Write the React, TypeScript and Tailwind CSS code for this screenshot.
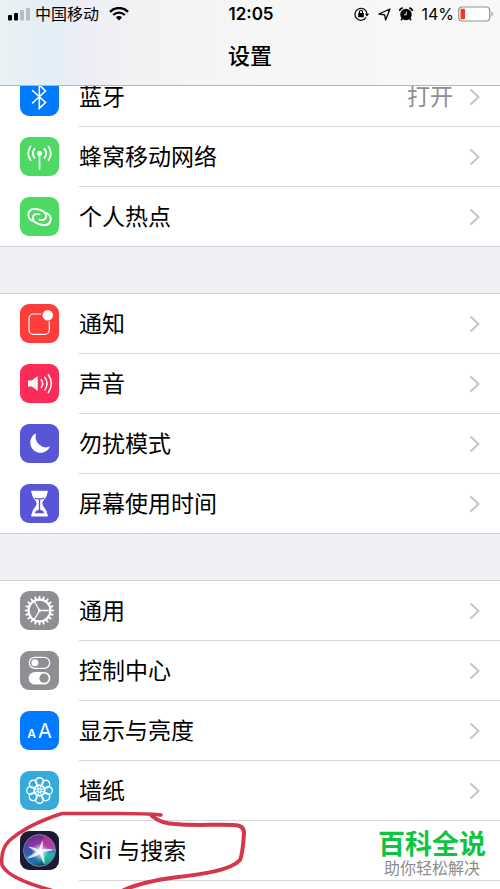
import type { ReactNode } from "react";

type SettingItem = {
  label: string;
  icon: ReactNode;
  tile: string;
  value?: string;
  marked?: boolean;
};

const GEAR_TEETH = Array.from({ length: 20 }, (_, i) => i * 18);
const PETALS = Array.from({ length: 8 }, (_, i) => i * 45);

function Glyph({ children }: { children: ReactNode }) {
  return (
    <svg viewBox="0 0 39 39" className="size-full" fill="none" stroke="white" strokeLinecap="round" strokeLinejoin="round" aria-hidden="true">
      {children}
    </svg>
  );
}

function BluetoothIcon() {
  return (
    <Glyph>
      <path d="M12.5 13.5 25.5 25.5 19.3 31.3V8l6.2 6L12.5 26" strokeWidth="1.6" strokeLinejoin="miter" />
    </Glyph>
  );
}

function CellularIcon() {
  return (
    <Glyph>
      <circle cx="19.5" cy="16.3" r="2.6" fill="white" stroke="none" />
      <path d="M19.5 17v15" strokeWidth="1.7" />
      <path d="M14.6 11.8a6.6 6.6 0 0 0 0 9M24.4 11.8a6.6 6.6 0 0 1 0 9" strokeWidth="1.8" />
      <path d="M10.6 9.5a11 11 0 0 0 0 13.6M28.4 9.5a11 11 0 0 1 0 13.6" strokeWidth="1.8" />
    </Glyph>
  );
}

function HotspotIcon() {
  const link = "M12.4 24C9.6 22.6 8 20 8.4 17 9 13.300 12 11.600 16 12 22 12.600 26.600 15.600 26.200 19.600 25.900 22.400 23 23.500 19.500 22.800";

  return (
    <Glyph>
      <path d={link} strokeWidth="1.9" />
      <path d={link} strokeWidth="1.9" transform="rotate(180 19.5 20)" />
    </Glyph>
  );
}

function NotificationIcon() {
  return (
    <Glyph>
      <rect x="9" y="10" width="20.3" height="20.3" rx="4.5" strokeWidth="1.2" />
      <circle cx="27.8" cy="11.2" r="6.6" fill="#fc3d39" stroke="none" />
      <circle cx="27.8" cy="11.2" r="5.2" fill="white" stroke="none" />
    </Glyph>
  );
}

function SoundIcon() {
  return (
    <Glyph>
      <path d="M8 16.4h3.8l5.9-4.4v15l-5.9-4.4H8Z" fill="white" stroke="none" />
      <path d="M21.2 15.7a6.4 6.4 0 0 1 0 7.8" strokeWidth="1.5" />
      <path d="M24.8 13.2a10.5 10.5 0 0 1 0 12.8" strokeWidth="1.5" />
      <path d="M28.3 10.7a14.6 14.6 0 0 1 0 17.8" strokeWidth="1.5" />
    </Glyph>
  );
}

function MoonIcon() {
  return (
    <Glyph>
      <path d="M16.2 9.2A10.3 10.3 0 1 0 30 22.6 10.6 10.6 0 0 1 16.2 9.2Z" fill="white" stroke="none" />
    </Glyph>
  );
}

function HourglassIcon() {
  return (
    <Glyph>
      <path
        d="M12.2 6.7h14.6c1 0 1.3 1.1.8 2l-.6 1.3c-.2 4.2-4.6 6-4.6 9.6s4.4 5.4 4.6 9.6l.6 1.3c.5.9.2 2-.8 2H12.2c-1 0-1.3-1.1-.8-2l.6-1.3c.2-4.2 4.6-6 4.6-9.6s-4.4-5.4-4.6-9.6l-.6-1.3c-.5-.9-.2-2 .8-2Z"
        fill="white"
        stroke="none"
      />
      <path d="M15.5 14.3c2.4.8 5.6.8 8 0M19.5 15v11.5" stroke="#5856d6" strokeWidth="1.3" />
      <path d="M14.6 29.2c1.1-2.6 3.2-3.4 4.9-3.4s3.8.8 4.9 3.4Z" fill="#5856d6" stroke="none" />
    </Glyph>
  );
}

function GearIcon() {
  return (
    <Glyph>
      <circle cx="19.5" cy="19.5" r="10.9" strokeWidth="2.1" />
      {GEAR_TEETH.map((angle) => (
        <path key={angle} d="m18.4 8.6.5-3.6h1.2l.5 3.6Z" fill="white" strokeWidth=".3" transform={`rotate(${angle} 19.5 19.5)`} />
      ))}
      <circle cx="19.5" cy="19.5" r="1.5" fill="white" stroke="none" />
      <path d="M19.5 19.5H30M19.5 19.5l-5.3-9.2M19.5 19.5l-5.3 9.2" strokeWidth="1.3" />
    </Glyph>
  );
}

function ControlIcon() {
  return (
    <Glyph>
      <rect x="9.3" y="6.3" width="20.4" height="11" rx="5.5" strokeWidth="1.3" />
      <circle cx="14.9" cy="11.8" r="3.5" fill="white" stroke="none" />
      <rect x="8.7" y="20.9" width="21.6" height="12.6" rx="6.3" fill="white" stroke="none" />
      <circle cx="24" cy="27.2" r="4.6" fill="#8e8e93" stroke="none" />
    </Glyph>
  );
}

function DisplayIcon() {
  return (
    <span className="flex size-full items-baseline justify-center gap-0.5 pt-1 font-[Inter,sans-serif] leading-8 text-white" aria-hidden="true">
      <span className="text-[12px] font-semibold">A</span>
      <span className="text-[20px]">A</span>
    </span>
  );
}

function WallpaperIcon() {
  return (
    <Glyph>
      {PETALS.map((angle) => (
        <g key={angle} transform={`rotate(${angle} 19.5 19.5)`}>
          <circle cx="19.5" cy="10.6" r="3.9" strokeWidth="1.4" />
          <ellipse cx="19.5" cy="15.4" rx="1.3" ry="2" strokeWidth=".7" />
        </g>
      ))}
      <circle cx="19.5" cy="19.5" r="1.7" strokeWidth="1.2" />
    </Glyph>
  );
}

function SiriIcon() {
  return (
    <Glyph>
      <defs>
        <linearGradient id="siri-orb" x1="0.3" y1="0" x2="0.6" y2="1">
          <stop offset="0" stopColor="#5a2a8c" />
          <stop offset=".35" stopColor="#9a3aa4" />
          <stop offset=".58" stopColor="#3d7fc0" />
          <stop offset=".8" stopColor="#1c8f9c" />
          <stop offset="1" stopColor="#14304f" />
        </linearGradient>
        <radialGradient id="siri-glow">
          <stop offset="0" stopColor="white" />
          <stop offset=".35" stopColor="#d9f4ff" stopOpacity=".7" />
          <stop offset="1" stopColor="white" stopOpacity="0" />
        </radialGradient>
      </defs>
      <circle cx="19.5" cy="19.5" r="16" fill="url(#siri-orb)" stroke="#9a91b5" strokeWidth=".8" />
      <path d="M20 19 24 4.5c7 2 11 8 11 14Z" fill="#d8358f" stroke="none" opacity=".55" />
      <path d="M20 20 5 12.5c-2 5-1.3 9.5.5 13Z" fill="#2458a8" stroke="none" opacity=".7" />
      <path d="M21 21l13.5 1c-1.5 6-5 10-9.5 12Z" fill="#27c6ad" stroke="none" opacity=".65" />
      <path d="M18.5 21 18 34.5c-5-.5-9-3.5-11-8Z" fill="#2c4fc0" stroke="none" opacity=".5" />
      <circle cx="20" cy="21" r="8.5" fill="url(#siri-glow)" stroke="none" />
      <path
        d="M8 15.5c4 .3 7.5 1.5 10.5 3.3L22.5 9c.6 3.5.4 6.5-.4 9.3 4-.8 8-.6 12 .8-4 1-7.8 1.7-11.3 2.2 1.3 4 1.8 8 1.7 12.5-2-3.5-3.5-7-4.7-10.7-4 2.6-8.3 4-13.3 4.4 3.5-2.4 6.8-4.7 10-7-3-1.3-6-3-8.5-5Z"
        fill="white"
        stroke="none"
        opacity=".8"
      />
    </Glyph>
  );
}

const groups: SettingItem[][] = [
  [
    { label: "蓝牙", icon: <BluetoothIcon />, tile: "bg-[#007aff]", value: "打开" },
    { label: "蜂窝移动网络", icon: <CellularIcon />, tile: "bg-[#4cd964]" },
    { label: "个人热点", icon: <HotspotIcon />, tile: "bg-[#4cd964]" },
  ],
  [
    { label: "通知", icon: <NotificationIcon />, tile: "bg-[#fc3d39]" },
    { label: "声音", icon: <SoundIcon />, tile: "bg-[#fc2b58]" },
    { label: "勿扰模式", icon: <MoonIcon />, tile: "bg-[#5856d6]" },
    { label: "屏幕使用时间", icon: <HourglassIcon />, tile: "bg-[#5856d6]" },
  ],
  [
    { label: "通用", icon: <GearIcon />, tile: "bg-[#8e8e93]" },
    { label: "控制中心", icon: <ControlIcon />, tile: "bg-[#8e8e93]" },
    { label: "显示与亮度", icon: <DisplayIcon />, tile: "bg-[#007aff]" },
    { label: "墙纸", icon: <WallpaperIcon />, tile: "bg-[#37aadc]" },
    { label: "Siri 与搜索", icon: <SiriIcon />, tile: "bg-[#1b1b35]", marked: true },
  ],
];

function StatusBar() {
  return (
    <div className="grid h-7 grid-cols-[1fr_auto_1fr] items-center pl-2 pr-1.5 text-[17px] leading-7 text-black">
      <div className="flex items-center">
        <svg width="23" height="14" viewBox="0 0 23 14" aria-hidden="true">
          <rect x="0" y="8" width="4" height="5.5" rx="1" />
          <rect x="6" y="6" width="4" height="7.5" rx="1" />
          <rect x="12" y="3" width="4" height="10.5" rx="1" fill="#b9bec2" />
          <rect x="18" y="1" width="4" height="12.5" rx="1" fill="#b9bec2" />
        </svg>
        <span className="ml-1 text-[16px]">中国移动</span>
        <svg width="20" height="14" viewBox="0 0 20 14" className="ml-2.5" fill="none" stroke="black" aria-hidden="true">
          <path d="M1 4.8a12.8 12.8 0 0 1 18 0" strokeWidth="2.5" />
          <path d="M4.2 8a8.2 8.2 0 0 1 11.6 0" strokeWidth="2.3" />
          <path d="M10 13.5 6.9 10.4a4.4 4.4 0 0 1 6.2 0Z" fill="black" stroke="none" />
        </svg>
      </div>
      <span className="font-semibold">12:05</span>
      <div className="flex items-center justify-end">
        <svg width="16" height="14" viewBox="0 0 16 14" fill="none" stroke="black" aria-hidden="true">
          <path d="M12.2 10.3A6 6 0 1 1 13 7" strokeWidth="1.2" />
          <path d="M10.8 6.8h4.4L13 9.6Z" fill="black" stroke="none" />
          <rect x="4.2" y="6" width="5.6" height="4.2" rx=".5" fill="black" stroke="none" />
          <path d="M5.5 6V4.8a1.5 1.5 0 0 1 3 0V6" strokeWidth="1.1" />
        </svg>
        <svg width="13" height="13" viewBox="0 0 13 13" className="ml-2" fill="none" stroke="black" strokeWidth="1.3" strokeLinejoin="round" aria-hidden="true">
          <path d="M12 1 7.6 12 6.6 6.8 1 6Z" />
        </svg>
        <svg width="14" height="14" viewBox="0 0 14 14" className="ml-2" aria-hidden="true">
          <circle cx="7" cy="7.5" r="5.7" />
          <path d="M.7 4A3 3 0 0 1 3.8 1.1M13.3 4A3 3 0 0 0 10.2 1.1M3.2 11.5 2 13.2M10.8 11.5l1.2 1.7" stroke="black" strokeWidth="1.6" fill="none" />
          <path d="M7.3 4.6v3.2H5" stroke="white" strokeWidth=".9" fill="none" />
        </svg>
        <span className="ml-2 text-[16px]">14%</span>
        <svg width="36" height="16" viewBox="0 0 36 16" className="ml-1" aria-hidden="true">
          <rect x=".7" y="1" width="31" height="14" rx="3.5" fill="white" stroke="#8f938d" strokeWidth="1.2" />
          <rect x="2.5" y="2.8" width="4.5" height="10.4" rx="1" fill="#e8392f" />
          <path d="M33.5 5.5c1.6.6 1.6 4.4 0 5Z" fill="#8f938d" />
        </svg>
      </div>
    </div>
  );
}

// hand-drawn red loop around a row
function MarkerLoop() {
  return (
    <svg viewBox="0 0 260 84" className="pointer-events-none absolute -top-3 left-0 h-[84px] w-[260px]" fill="none" stroke="#d5364b" strokeLinecap="round" strokeLinejoin="round" aria-hidden="true">
      <path d="M161 7C151 6 140 5.500 120 5.500H62C45 11 22 21 9 33 2 40 1 48 2 57c4 9 22 18 52 26" strokeWidth="3.5" />
      <path d="M152 8c6 5 13 8 24 8 20 2 40 0 58 1 7 0 10 3 10 8-1 12-1 20-4 27-9 10-36 14-62 17-24 3-42 7-56 14" strokeWidth="4" />
    </svg>
  );
}

function SettingRow({ item, first }: { item: SettingItem; first: boolean }) {
  return (
    <li className="relative">
      <a href="#" className="flex items-stretch pl-5">
        <span className="flex items-center">
          <span className={`block size-[39px] overflow-hidden rounded-[9px] ${item.tile}`}>{item.icon}</span>
        </span>
        <span className={`ml-5 flex flex-1 items-center pr-5 ${first ? "h-[59px]" : "h-15 border-t border-[#d6d6da]"}`}>
          <span className="flex-1 pt-0.5 text-black">{item.label}</span>
          {item.value ? <span className="pt-0.5 text-[#8e8e93]">{item.value}</span> : null}
          {item.marked ? null : (
            <svg width="11" height="18" viewBox="0 0 11 18" className="ml-4" fill="none" stroke="#c4c4c9" strokeWidth="2" aria-hidden="true">
              <path d="m1.5 1.5 8 7.5-8 7.5" />
            </svg>
          )}
        </span>
      </a>
      {item.marked ? <MarkerLoop /> : null}
    </li>
  );
}

export default function App() {
  return (
    <div className="relative flex h-screen flex-col overflow-hidden bg-white font-[Inter,'Noto_Sans_CJK_SC',sans-serif]">
      <header className="relative z-10 shrink-0 border-b border-[#b7b7ba] bg-[linear-gradient(90deg,#ebf1f4_0%,#e2eff6_9%,#ecedf6_16%,#f2f2f4_26%,#f6f6f7_50%,#f8f8f9_100%)]">
        <StatusBar />
        <h1 className="h-[57px] text-center text-[22px] font-medium leading-[57px] text-black">设置</h1>
      </header>

      <main className="-mt-5 flex flex-1 flex-col gap-[46px] bg-[#efeff4] font-[Roboto,'Noto_Sans_CJK_SC',sans-serif] text-[23px] leading-8">
        {groups.map((group) => (
          <ul key={group[0].label} className="border-y border-[#d0d0d5] bg-white last:flex-1 last:border-b-0">
            {group.map((item, index) => (
              <SettingRow key={item.label} item={item} first={index === 0} />
            ))}
            {group === groups[2] ? <li className="ml-[79px] border-t border-[#d6d6da]" /> : null}
          </ul>
        ))}
      </main>

      <div className="absolute bottom-2 right-3.5 text-center font-['Liberation_Sans','Noto_Sans_CJK_SC',sans-serif] leading-6">
        <p className="text-[27px] font-bold text-[#0fc441]">百科全说</p>
        <p className="text-[16px] text-[#8c8c8c]">助你轻松解决</p>
      </div>
    </div>
  );
}
